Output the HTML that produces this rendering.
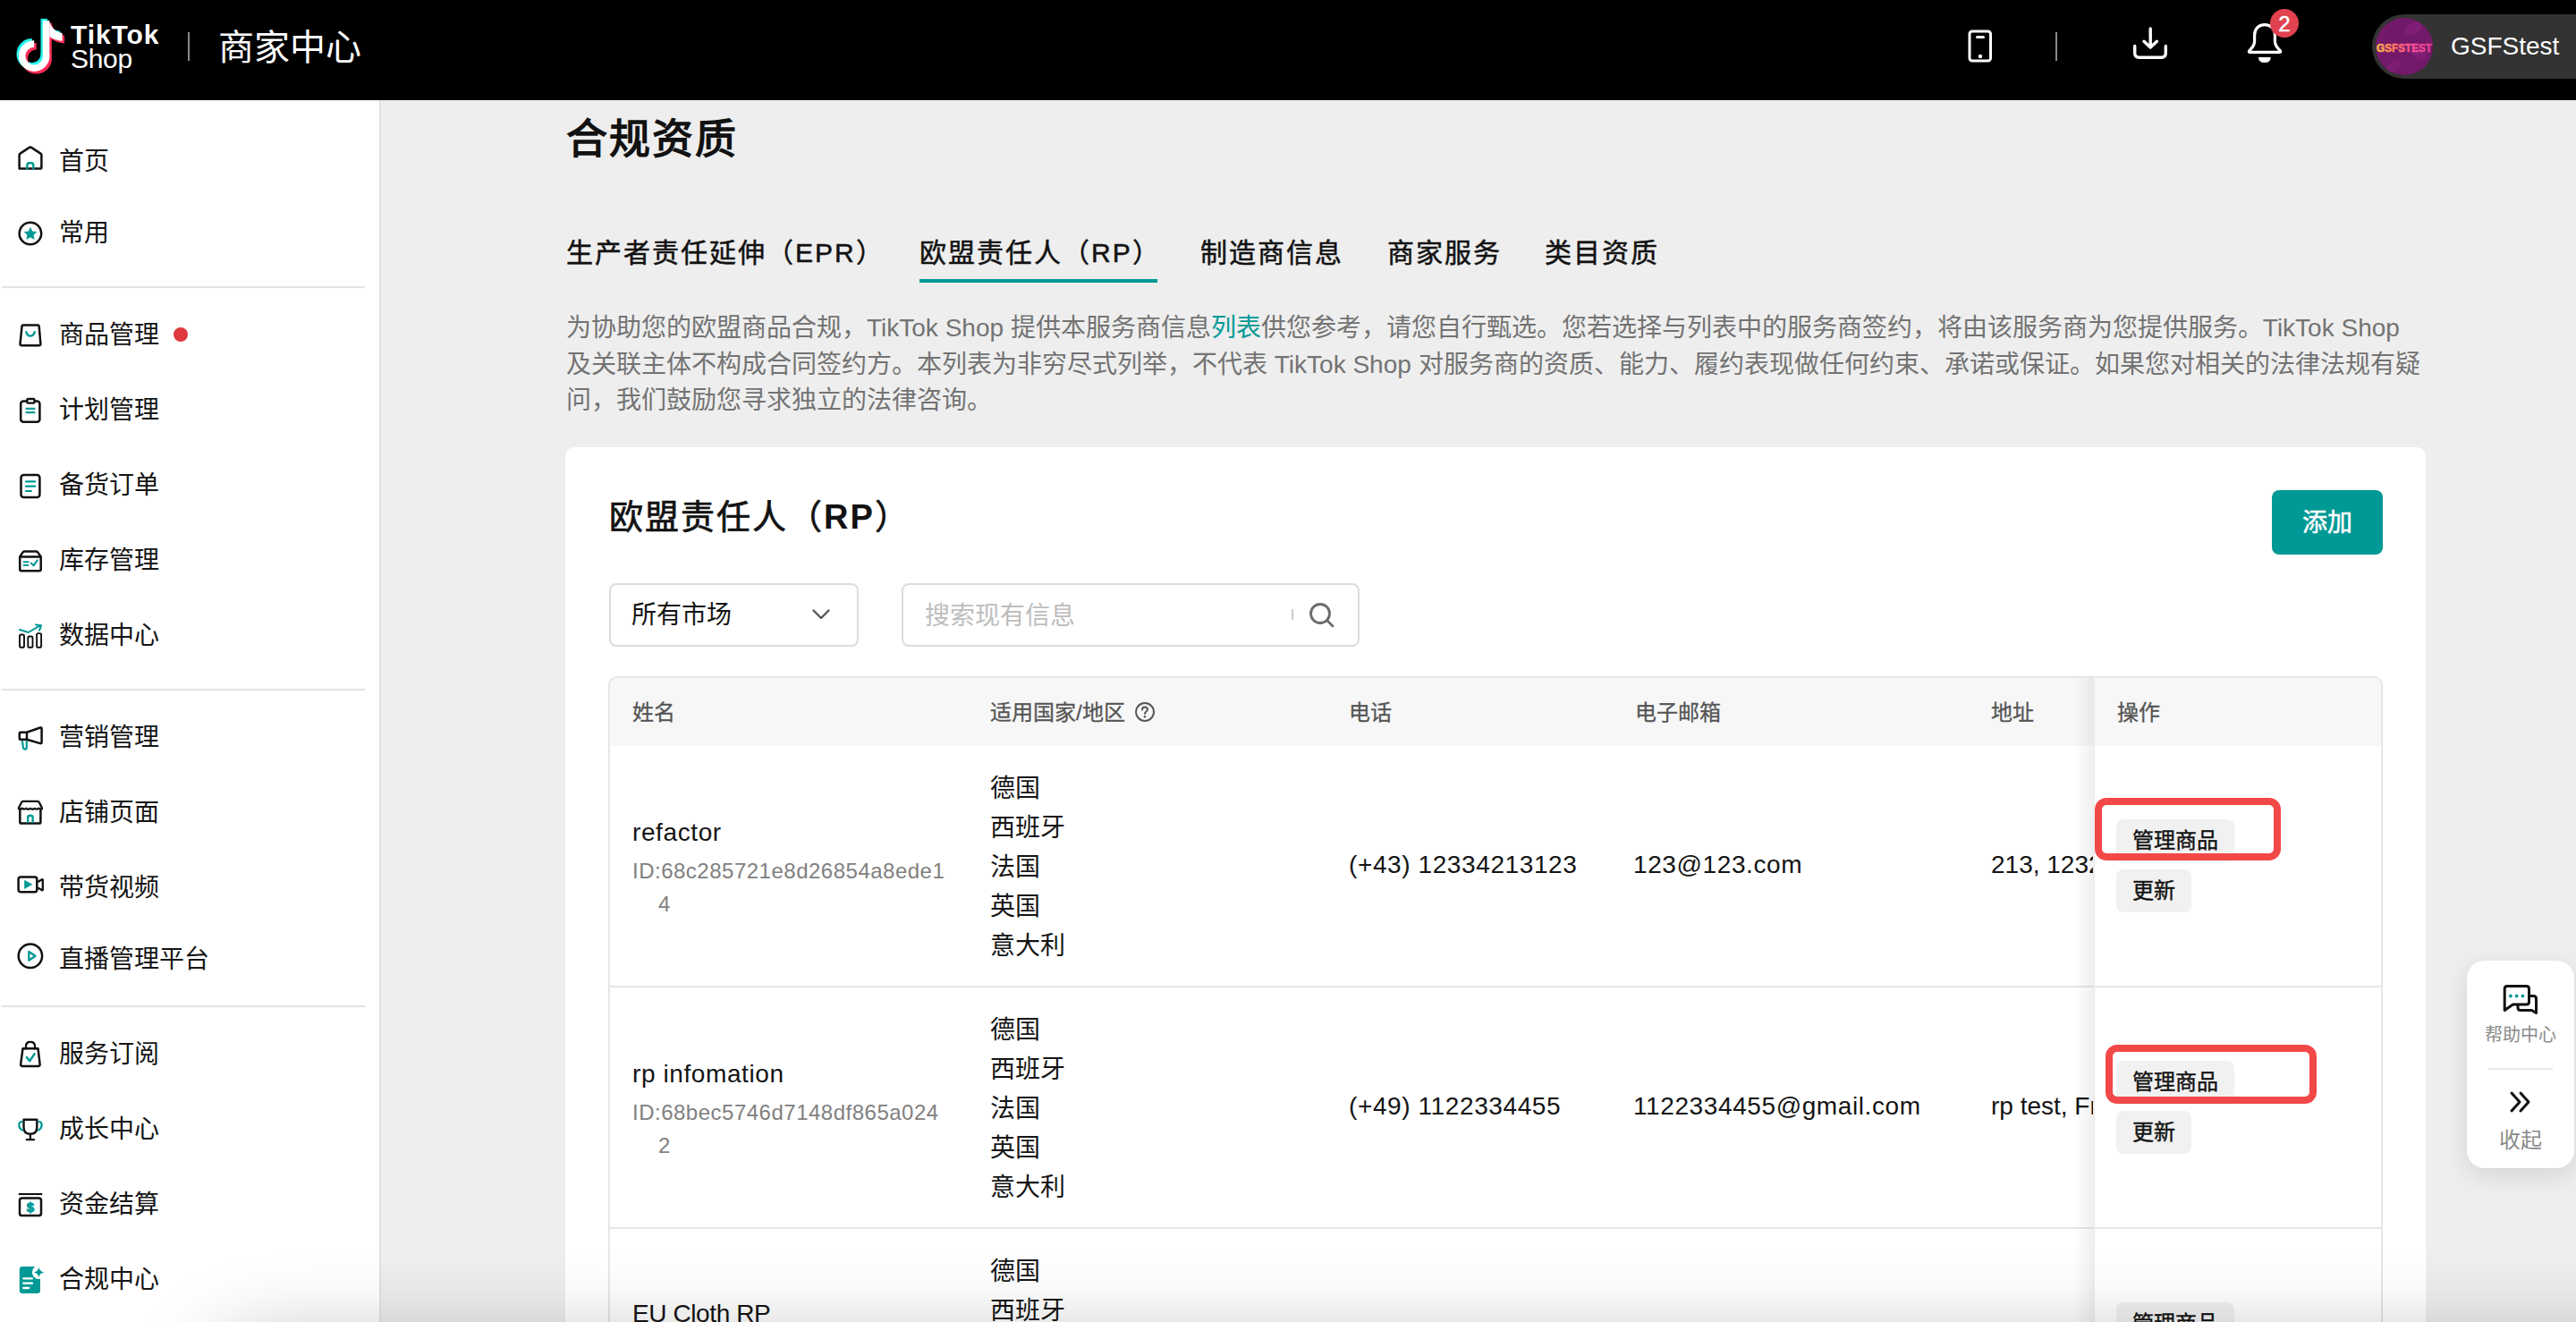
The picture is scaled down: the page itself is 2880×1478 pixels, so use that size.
<!DOCTYPE html>
<html lang="zh-CN"><head><meta charset="utf-8">
<style>
*{box-sizing:border-box;margin:0;padding:0}
html,body{width:2880px;height:1478px;overflow:hidden;background:#eeeeee;font-family:"Liberation Sans",sans-serif;color:#121212}
.abs{position:absolute}
.nw{white-space:nowrap}
#hdr{position:absolute;left:0;top:0;width:2880px;height:112px;background:#000}
#side{position:absolute;left:0;top:112px;width:424px;height:1366px;background:#fff}
.si{position:absolute;left:0;height:40px;width:420px}
.si svg{position:absolute;left:19px;top:0;width:30px;height:40px;overflow:visible}
.si span{position:absolute;left:66px;top:0;font-size:28px;line-height:40px;color:#141414;white-space:nowrap}
.sdiv{position:absolute;left:2px;width:406px;height:2px;background:#e3e3e3}
.tab{position:absolute;top:259px;font-size:30px;line-height:48px;font-weight:400;letter-spacing:2px;-webkit-text-stroke:0.5px #121212;color:#121212;white-space:nowrap}
.para{position:absolute;left:633px;font-size:28px;line-height:40px;color:#737373;white-space:nowrap}
#card{position:absolute;left:632px;top:500px;width:2080px;height:1100px;background:#fff;border-radius:10px}
.th{position:absolute;top:777px;font-size:24px;line-height:40px;color:#555;font-weight:400;-webkit-text-stroke:0.3px #555;white-space:nowrap}
.td{position:absolute;font-size:28px;line-height:40px;color:#141414;white-space:nowrap;letter-spacing:0.6px}
.cty{position:absolute;left:1107px;font-size:28px;line-height:44px;color:#141414;white-space:nowrap}
.idl{position:absolute;left:707px;font-size:24px;line-height:36px;color:#808080;white-space:nowrap;letter-spacing:0.5px}
.btn{position:absolute;height:48px;background:#f1f1f1;border-radius:8px;font-size:24px;line-height:48px;color:#141414;font-weight:400;-webkit-text-stroke:0.45px #141414;padding:0 18px;white-space:nowrap}
.rbox{position:absolute;border:8px solid #f34848;border-radius:13px}
.hline{position:absolute;left:680px;width:1984px;height:2px;background:#e6e6e6}
</style></head><body>

<!-- HEADER -->
<div id="hdr">
  <svg class="abs" style="left:14px;top:17px" width="64" height="70" viewBox="0 0 64 70"><g transform="translate(-2.4,-2.2)" fill="#25F4EE"><path d="M24.2 32.05 A13.55 13.55 0 1 0 37.75 45.6 V44.6" fill="none" stroke="#25F4EE" stroke-width="7.5"/><rect x="33.9" y="6.1" width="7.4" height="40.6"/><path d="M41.3 6.1 C42 12 47 19 55.6 20.1 V28.9 C50 28.5 45 26.5 41.3 24.1 Z"/></g><g transform="translate(2.5,2.6)" fill="#FE2C55"><path d="M24.2 32.05 A13.55 13.55 0 1 0 37.75 45.6 V44.6" fill="none" stroke="#FE2C55" stroke-width="7.5"/><rect x="33.9" y="6.1" width="7.4" height="40.6"/><path d="M41.3 6.1 C42 12 47 19 55.6 20.1 V28.9 C50 28.5 45 26.5 41.3 24.1 Z"/></g><g transform="translate(0,0)" fill="#fff"><path d="M24.2 32.05 A13.55 13.55 0 1 0 37.75 45.6 V44.6" fill="none" stroke="#fff" stroke-width="7.5"/><rect x="33.9" y="6.1" width="7.4" height="40.6"/><path d="M41.3 6.1 C42 12 47 19 55.6 20.1 V28.9 C50 28.5 45 26.5 41.3 24.1 Z"/></g></svg>
  <div class="abs nw" style="left:79px;top:24px;font-size:30px;line-height:30px;font-weight:bold;color:#fff;letter-spacing:0.9px">TikTok</div>
  <div class="abs nw" style="left:79px;top:51px;font-size:30px;line-height:30px;color:#fff;letter-spacing:-0.3px">Shop</div>
  <div class="abs" style="left:210px;top:36px;width:2px;height:32px;background:#8a8a8a"></div>
  <div class="abs nw" style="left:244px;top:28px;font-size:40px;line-height:50px;color:#fff">商家中心</div>

  <!-- phone -->
  <svg class="abs" style="left:2198px;top:32px" width="32" height="40" viewBox="0 0 32 40">
    <rect x="4" y="3" width="23.5" height="33" rx="3" fill="none" stroke="#fff" stroke-width="3"/>
    <rect x="11" y="8" width="10" height="3" rx="1.5" fill="#fff"/>
    <circle cx="16" cy="31" r="2.2" fill="#fff"/>
  </svg>
  <div class="abs" style="left:2298px;top:36px;width:2px;height:32px;background:#8a8a8a"></div>
  <!-- download -->
  <svg class="abs" style="left:2383px;top:28px" width="42" height="40" viewBox="0 0 42 40">
    <path d="M21.2 3.9 V24 M14 18.2 L21.2 25 L28.4 18.2" fill="none" stroke="#fff" stroke-width="3.4" stroke-linecap="round" stroke-linejoin="round"/>
    <path d="M3.7 23.5 V31.3 Q3.7 36.3 8.7 36.3 H33.3 Q38.3 36.3 38.3 31.3 V23.5" fill="none" stroke="#fff" stroke-width="3.4" stroke-linecap="round"/>
  </svg>
  <!-- bell -->
  <svg class="abs" style="left:2509px;top:26px" width="46" height="46" viewBox="0 0 46 46">
    <path d="M23 1.7 C16 1.7 11.6 6.5 11.6 13.5 V20 C11.6 24.5 9.5 27 6.5 29.8 Q4.2 32.2 6.5 32.3 H39.5 Q41.8 32.2 39.5 29.8 C36.5 27 34.4 24.5 34.4 20 V13.5 C34.4 6.5 30 1.7 23 1.7 Z" fill="none" stroke="#fff" stroke-width="3.2" stroke-linejoin="round"/>
    <path d="M16 37.9 H29.7 Q29.7 43.9 22.9 43.9 Q16 43.9 16 37.9 Z" fill="#fff"/>
  </svg>
  <div class="abs" style="left:2538px;top:10px;width:32px;height:32px;border-radius:50%;background:#e1424f;color:#fff;font-size:24px;line-height:33px;text-align:center;-webkit-text-stroke:0.5px #fff">2</div>
  <!-- user pill -->
  <div class="abs" style="left:2652px;top:16px;width:300px;height:72px;border-radius:36px;background:#333333"></div>
  <svg class="abs" style="left:2656px;top:20px" width="64" height="64" viewBox="0 0 64 64">
    <defs><linearGradient id="ag" x1="0" x2="1" y1="0" y2="0"><stop offset="0" stop-color="#f9c14a"/><stop offset="0.3" stop-color="#ff7a5e"/><stop offset="0.65" stop-color="#ff4f9a"/><stop offset="1" stop-color="#d8408a"/></linearGradient>
    <clipPath id="ac"><circle cx="32" cy="32" r="32"/></clipPath></defs>
    <circle cx="32" cy="32" r="32" fill="#741a6a"/>
    <g clip-path="url(#ac)" fill="#84207a" opacity="0.8">
      <ellipse cx="42" cy="12" rx="10" ry="6" transform="rotate(-25 42 12)"/>
      <ellipse cx="48" cy="40" rx="9" ry="6" transform="rotate(30 48 40)"/>
      <ellipse cx="20" cy="54" rx="10" ry="5" transform="rotate(-40 20 54)"/>
    </g>
    <text x="32" y="37.5" text-anchor="middle" font-family="Liberation Sans" font-weight="bold" font-size="13" textLength="62" lengthAdjust="spacingAndGlyphs" fill="url(#ag)" stroke="url(#ag)" stroke-width="0.6">GSFSTEST</text>
  </svg>
  <div class="abs nw" style="left:2740px;top:30px;font-size:28px;line-height:44px;color:#fff">GSFStest</div>
</div>

<!-- SIDEBAR -->
<div id="side"></div>
<div class="abs" style="left:424px;top:112px;width:2px;height:1366px;background:#e2e2e2"></div>
<div class="si" style="top:161px"><svg viewBox="0 0 30 40"><path d="M2.6 27.5 V12.3 Q2.6 11.2 3.6 10.6 L13.8 3.9 Q14.9 3.2 16 3.9 L26.4 10.6 Q27.4 11.2 27.4 12.3 V26.2 Q27.4 27.5 26 27.5 H4 Q2.6 27.5 2.6 26.2 Z" fill="none" stroke="#111" stroke-width="2.5" stroke-linejoin="round"/><path d="M11.4 28.5 V23.5 Q11.4 21.2 13.6 21.2 H16.1 Q18.3 21.2 18.3 23.5 V28.5" fill="none" stroke="#009995" stroke-width="2.4"/></svg><span>首页</span></div>
<div class="si" style="top:241px"><svg viewBox="0 0 30 40"><circle cx="14.9" cy="20" r="12.3" fill="none" stroke="#111" stroke-width="2.5"/><path d="M15.00 13.60 L16.94 17.93 L21.66 18.44 L18.14 21.62 L19.11 26.26 L15.00 23.90 L10.89 26.26 L11.86 21.62 L8.34 18.44 L13.06 17.93 Z" fill="#009995" stroke="#009995" stroke-width="0.8" stroke-linejoin="round"/></svg><span>常用</span></div>
<div class="sdiv" style="top:320px"></div>
<div class="si" style="top:355px"><svg viewBox="0 0 30 40"><path d="M7 8.5 H23.2 Q24.6 8.5 24.7 9.8 L26.4 29.6 Q26.5 31.2 25 31.2 H4.9 Q3.4 31.2 3.5 29.6 L5.5 9.8 Q5.6 8.5 7 8.5 Z" fill="none" stroke="#111" stroke-width="2.5" stroke-linejoin="round"/><path d="M10.4 16.2 Q11.5 20.6 15 20.6 Q18.5 20.6 19.8 16.2" fill="none" stroke="#009995" stroke-width="2.4" stroke-linecap="round"/></svg><span>商品管理</span></div>
<div class="abs" style="left:194px;top:366px;width:16px;height:16px;border-radius:50%;background:#e0393e"></div>
<div class="si" style="top:439px"><svg viewBox="0 0 30 40"><rect x="4.2" y="9.6" width="21.2" height="23.2" rx="3" fill="none" stroke="#111" stroke-width="2.5"/><rect x="11.3" y="7" width="8.2" height="4.6" rx="1.2" fill="#fff" stroke="#111" stroke-width="2.4"/><path d="M10.5 17.8 H19.5 M10.5 22.2 H19.5" stroke="#009995" stroke-width="2.2" stroke-linecap="round"/></svg><span>计划管理</span></div>
<div class="si" style="top:523px"><svg viewBox="0 0 30 40"><rect x="4.5" y="8" width="20.9" height="25.1" rx="3" fill="none" stroke="#111" stroke-width="2.5"/><path d="M10 15.3 H20.2 M10 20.7 H20.2 M10 26 H16" stroke="#009995" stroke-width="2.2" stroke-linecap="round"/></svg><span>备货订单</span></div>
<div class="si" style="top:607px"><svg viewBox="0 0 30 40"><path d="M3.2 15.4 L6.4 10.6 Q7 9.6 8.2 9.6 H21.6 Q22.8 9.6 23.4 10.6 L26.7 15.4 V29.6 Q26.7 31.3 25 31.3 H4.9 Q3.2 31.3 3.2 29.6 Z M3.2 15.4 H26.7" fill="none" stroke="#111" stroke-width="2.5" stroke-linejoin="round"/><path d="M7.5 21.2 H12.5 M7.5 25.1 H12.5" stroke="#009995" stroke-width="2" stroke-linecap="round"/><path d="M15.8 22.5 L18.5 25.4 L22.8 19.4" fill="none" stroke="#009995" stroke-width="2" stroke-linecap="round" stroke-linejoin="round"/></svg><span>库存管理</span></div>
<div class="si" style="top:691px"><svg viewBox="0 0 30 40"><rect x="3" y="18.5" width="5" height="14.3" rx="1.6" fill="none" stroke="#111" stroke-width="1.9"/><rect x="12.3" y="20.5" width="5.2" height="12.3" rx="1.6" fill="none" stroke="#111" stroke-width="1.9"/><rect x="22.1" y="17.1" width="5" height="15.7" rx="1.6" fill="none" stroke="#111" stroke-width="1.9"/><path d="M3 13 L12.8 16 L25.3 8.6" fill="none" stroke="#009995" stroke-width="2" stroke-linecap="round" stroke-linejoin="round"/><path d="M21 7.5 L27 8.3 L25 13.8" fill="none" stroke="#009995" stroke-width="2" stroke-linecap="round" stroke-linejoin="round"/></svg><span>数据中心</span></div>
<div class="sdiv" style="top:770px"></div>
<div class="si" style="top:805px"><svg viewBox="0 0 30 40"><path d="M3.8 13.7 H11 V21.8 H3.8 Q2.8 21.8 2.8 20.8 V14.7 Q2.8 13.7 3.8 13.7 Z M11 13.7 L26 8.5 Q27.6 8.2 27.6 9.6 V25 Q27.6 26.5 26 26.1 L11 21.8" fill="none" stroke="#111" stroke-width="2.5" stroke-linejoin="round"/><path d="M5.9 23 L6.9 30.5 Q7.3 32.6 9 32.6 Q10.8 32.6 10.8 30.5 V23" fill="none" stroke="#009995" stroke-width="2.2"/></svg><span>营销管理</span></div>
<div class="si" style="top:889px"><svg viewBox="0 0 30 40"><path d="M3.3 15 V30 Q3.3 31.6 4.9 31.6 H24.8 Q26.4 31.6 26.4 30 V15" fill="none" stroke="#111" stroke-width="2.5"/><path d="M5 8.2 Q5.5 6.9 6.9 6.9 H23 Q24.4 6.9 24.9 8.2 L27.9 14.3 Q28.2 15.3 27.2 15.6 Q25.5 16 24.3 14.6 Q22.2 16.6 19.8 14.8 Q17.4 16.6 15 14.8 Q12.6 16.6 10.2 14.8 Q7.8 16.6 5.6 14.6 Q4.3 16 2.6 15.6 Q1.6 15.3 1.9 14.3 Z" fill="none" stroke="#111" stroke-width="2.3" stroke-linejoin="round"/><path d="M12.2 31 V24.5 Q12.2 22.8 14.9 22.8 Q17.6 22.8 17.6 24.5 V31" fill="none" stroke="#009995" stroke-width="2.4"/></svg><span>店铺页面</span></div>
<div class="si" style="top:973px"><svg viewBox="0 0 30 40"><rect x="1.6" y="7.5" width="20.7" height="16.8" rx="2.5" fill="none" stroke="#111" stroke-width="2.5"/><path d="M23.2 13 L28 10.3 Q28.8 10 28.8 10.8 V21.7 Q28.8 22.5 28 22.2 L23.2 19.5" fill="none" stroke="#111" stroke-width="2.3" stroke-linejoin="round"/><path d="M8.5 11.2 V20.5 L16.8 15.8 Z" fill="#009995" stroke="#009995" stroke-width="0.6" stroke-linejoin="round"/></svg><span>带货视频</span></div>
<div class="si" style="top:1053px"><svg viewBox="0 0 30 40"><circle cx="14.9" cy="15.8" r="13.2" fill="none" stroke="#111" stroke-width="2.5"/><path d="M13.3 11 V20.8 L20.5 15.8 Z" fill="none" stroke="#009995" stroke-width="2.3" stroke-linejoin="round"/></svg><span>直播管理平台</span></div>
<div class="sdiv" style="top:1124px"></div>
<div class="si" style="top:1159px"><svg viewBox="0 0 30 40"><path d="M10 14.5 V10.5 Q10 5.8 15 5.8 Q20 5.8 20 10.5 V14.5" fill="none" stroke="#111" stroke-width="2.3"/><path d="M6.5 13.2 H23.5 L25.6 30.6 Q25.9 33 23.6 33 H6.2 Q3.9 33 4.2 30.6 Z" fill="none" stroke="#111" stroke-width="2.5" stroke-linejoin="round"/><path d="M10.8 23 L14.2 27.2 L19.6 19.3" fill="none" stroke="#009995" stroke-width="2.4" stroke-linecap="round" stroke-linejoin="round"/></svg><span>服务订阅</span></div>
<div class="si" style="top:1243px"><svg viewBox="0 0 30 40"><path d="M7.5 8.8 H22.3 V17.2 Q22.3 24.8 14.9 24.8 Q7.5 24.8 7.5 17.2 Z" fill="none" stroke="#111" stroke-width="2.4" stroke-linejoin="round"/><path d="M14.9 24.8 V30.8 M10.8 31.2 H19" stroke="#111" stroke-width="2.3" stroke-linecap="round"/><path d="M6.4 11.2 Q2.3 10.6 2.3 14.3 Q2.3 19.6 6.8 20.8 M23.4 11.2 Q27.6 10.6 27.6 14.3 Q27.6 19.6 23.1 20.8" fill="none" stroke="#009995" stroke-width="2.3"/></svg><span>成长中心</span></div>
<div class="si" style="top:1327px"><svg viewBox="0 0 30 40"><path d="M1.8 8 H28.2" stroke="#111" stroke-width="2.1"/><rect x="3" y="12.4" width="24" height="19.6" rx="2.6" fill="none" stroke="#111" stroke-width="2.5"/><text x="15" y="28.2" font-size="15" font-weight="bold" text-anchor="middle" fill="#009995" stroke="#009995" stroke-width="0.9" font-family="Liberation Sans">$</text></svg><span>资金结算</span></div>
<div class="si" style="top:1411px"><svg viewBox="0 0 30 40"><rect x="2.8" y="5" width="23.2" height="30" rx="3.2" fill="#009995"/><circle cx="24.5" cy="11.4" r="7.6" fill="#fff"/><path d="M24.5 5.6 Q25.2 10.6 30.3 11.4 Q25.2 12.2 24.5 17.2 Q23.8 12.2 18.7 11.4 Q23.8 10.6 24.5 5.6 Z" fill="#009995"/><path d="M7.2 18.3 H17 M7.2 23.7 H17 M7.2 29 H13.2" stroke="#fff" stroke-width="2.3" stroke-linecap="round"/></svg><span>合规中心</span></div>

<!-- MAIN -->
<div class="abs nw" style="left:633px;top:125px;font-size:46px;line-height:60px;font-weight:bold;letter-spacing:2px;color:#121212">合规资质</div>

<div class="tab" style="left:633px">生产者责任延伸（EPR）</div>
<div class="tab" style="left:1028px">欧盟责任人（RP）</div>
<div class="tab" style="left:1342px">制造商信息</div>
<div class="tab" style="left:1551px">商家服务</div>
<div class="tab" style="left:1727px">类目资质</div>
<div class="abs" style="left:1028px;top:312px;width:266px;height:4px;background:#009995"></div>

<div class="para" style="top:347px">为协助您的欧盟商品合规，TikTok Shop 提供本服务商信息<span style="color:#009995">列表</span>供您参考，请您自行甄选。您若选择与列表中的服务商签约，将由该服务商为您提供服务。TikTok Shop</div>
<div class="para" style="top:388px">及关联主体不构成合同签约方。本列表为非穷尽式列举，不代表 TikTok Shop 对服务商的资质、能力、履约表现做任何约束、承诺或保证。如果您对相关的法律法规有疑</div>
<div class="para" style="top:428px">问，我们鼓励您寻求独立的法律咨询。</div>

<div id="card"></div>
<div class="abs nw" style="left:681px;top:553px;font-size:38px;line-height:50px;font-weight:400;-webkit-text-stroke:0.7px #121212;letter-spacing:2px;color:#121212">欧盟责任人（<b style="-webkit-text-stroke:0">RP</b>）</div>
<div class="abs nw" style="left:2540px;top:548px;width:124px;height:72px;border-radius:8px;background:#009995;color:#fff;font-size:28px;line-height:74px;text-align:center;-webkit-text-stroke:0.5px #fff">添加</div>

<div class="abs" style="left:681px;top:652px;width:279px;height:71px;border:2px solid #dcdcdc;border-radius:8px"></div>
<div class="abs nw" style="left:706px;top:668px;font-size:28px;line-height:40px;color:#141414">所有市场</div>
<svg class="abs" style="left:906px;top:678px" width="24" height="18" viewBox="0 0 24 18"><path d="M3.5 4.5 L12 13 L20.5 4.5" fill="none" stroke="#555" stroke-width="2.4" stroke-linecap="round" stroke-linejoin="round"/></svg>

<div class="abs" style="left:1008px;top:652px;width:512px;height:71px;border:2px solid #dcdcdc;border-radius:8px"></div>
<div class="abs nw" style="left:1034px;top:669px;font-size:28px;line-height:40px;color:#bdbdbd">搜索现有信息</div>
<div class="abs" style="left:1444px;top:681px;width:2px;height:12px;background:#ccc"></div>
<svg class="abs" style="left:1462px;top:672px" width="32" height="32" viewBox="0 0 32 32"><circle cx="14" cy="14" r="10.5" fill="none" stroke="#6b6b6b" stroke-width="2.8"/><path d="M21.5 21.5 L28 28" stroke="#6b6b6b" stroke-width="2.8" stroke-linecap="round"/></svg>

<!-- TABLE -->
<div class="abs" style="left:680px;top:756px;width:1984px;height:800px;border:2px solid #e6e6e6;border-radius:10px 10px 0 0;background:#fff"></div>
<div class="abs" style="left:682px;top:758px;width:1980px;height:76px;background:#f7f7f7;border-radius:8px 8px 0 0"></div>
<div class="th" style="left:707px">姓名</div>
<div class="th" style="left:1107px">适用国家/地区</div>
<svg class="abs" style="left:1268px;top:784px" width="24" height="24" viewBox="0 0 24 24"><circle cx="12" cy="12" r="10" fill="none" stroke="#555" stroke-width="2"/><path d="M9 9.5 Q9 6.5 12 6.5 Q15 6.5 15 9.3 Q15 11 13 12 Q12 12.6 12 14" fill="none" stroke="#555" stroke-width="2" stroke-linecap="round"/><circle cx="12" cy="17.2" r="1.3" fill="#555"/></svg>
<div class="th" style="left:1508px">电话</div>
<div class="th" style="left:1828px">电子邮箱</div>
<div class="th" style="left:2226px">地址</div>
<div class="th" style="left:2367px">操作</div>

<!-- row 1 -->
<div class="td" style="left:707px;top:911px">refactor</div>
<div class="idl" style="top:956px">ID:68c285721e8d26854a8ede1</div>
<div class="idl" style="top:993px;left:736px">4</div>
<div class="cty" style="top:860px">德国</div>
<div class="cty" style="top:904px">西班牙</div>
<div class="cty" style="top:948px">法国</div>
<div class="cty" style="top:992px">英国</div>
<div class="cty" style="top:1036px">意大利</div>
<div class="td" style="left:1508px;top:947px">(+43) 12334213123</div>
<div class="td" style="left:1826px;top:947px">123@123.com</div>
<div class="td" style="left:2226px;top:947px;width:116px;overflow:hidden;letter-spacing:0">213, 1232, Vienna</div>
<div class="hline" style="top:1102px"></div>

<!-- row 2 -->
<div class="td" style="left:707px;top:1181px">rp infomation</div>
<div class="idl" style="top:1226px">ID:68bec5746d7148df865a024</div>
<div class="idl" style="top:1263px;left:736px">2</div>
<div class="cty" style="top:1130px">德国</div>
<div class="cty" style="top:1174px">西班牙</div>
<div class="cty" style="top:1218px">法国</div>
<div class="cty" style="top:1262px">英国</div>
<div class="cty" style="top:1306px">意大利</div>
<div class="td" style="left:1508px;top:1217px">(+49) 1122334455</div>
<div class="td" style="left:1826px;top:1217px">1122334455@gmail.com</div>
<div class="td" style="left:2226px;top:1217px;width:116px;overflow:hidden;letter-spacing:0">rp test, France</div>
<div class="hline" style="top:1372px"></div>

<!-- row 3 -->
<div class="td" style="left:707px;top:1449px;letter-spacing:-0.4px">EU Cloth RP</div>
<div class="cty" style="top:1400px">德国</div>
<div class="cty" style="top:1444px">西班牙</div>

<!-- fixed column -->
<div class="abs" style="left:2318px;top:758px;width:22px;height:720px;background:linear-gradient(to right,rgba(0,0,0,0),rgba(0,0,0,0.06))"></div>
<div class="abs" style="left:2340px;top:758px;width:2px;height:720px;background:#ececec"></div>

<div class="btn" style="left:2366px;top:916px">管理商品</div>
<div class="btn" style="left:2366px;top:972px">更新</div>
<div class="rbox" style="left:2342px;top:892px;width:208px;height:70px"></div>

<div class="btn" style="left:2366px;top:1186px">管理商品</div>
<div class="btn" style="left:2366px;top:1242px">更新</div>
<div class="rbox" style="left:2354px;top:1168px;width:236px;height:66px"></div>

<div class="btn" style="left:2366px;top:1456px">管理商品</div>

<!-- help widget -->
<div class="abs" style="left:2758px;top:1074px;width:120px;height:232px;background:#fff;border-radius:20px;box-shadow:0 8px 28px rgba(0,0,0,0.11)"></div>
<svg class="abs" style="left:2796px;top:1099px" width="42" height="38" viewBox="0 0 42 38">
  <path d="M4.2 30.5 V6.5 Q4.2 3.5 7.2 3.5 H28.5 Q31.5 3.5 31.5 6.5 V21 Q31.5 24 28.5 24 H13.5 Z" fill="none" stroke="#111" stroke-width="3" stroke-linejoin="round"/>
  <path d="M31.5 14.5 H36.5 Q39.5 14.5 39.5 17.5 V33.5 L34.5 30.5 H22 Q19 30.5 19 27.5 V25" fill="none" stroke="#111" stroke-width="3" stroke-linejoin="round"/>
  <circle cx="10.9" cy="14.5" r="1.9" fill="#009995"/><circle cx="17.6" cy="14.5" r="1.9" fill="#009995"/><circle cx="24.4" cy="14.5" r="1.9" fill="#009995"/>
</svg>
<div class="abs nw" style="left:2776px;top:1143px;width:84px;text-align:center;font-size:20px;line-height:28px;color:#8a8a8a">帮助中心</div>
<div class="abs" style="left:2782px;top:1194px;width:72px;height:2px;background:#e6e6e6"></div>
<svg class="abs" style="left:2804px;top:1218px" width="28" height="28" viewBox="0 0 28 28"><path d="M4 4 L13 14 L4 24 M14 4 L23 14 L14 24" fill="none" stroke="#111" stroke-width="3" stroke-linecap="round" stroke-linejoin="round"/></svg>
<div class="abs nw" style="left:2776px;top:1257px;width:84px;text-align:center;font-size:24px;line-height:36px;color:#8a8a8a">收起</div>

<!-- bottom shadow -->
<div class="abs" style="left:250px;top:1525px;width:3000px;height:120px;border-radius:60px;background:#000;box-shadow:0 0 90px 30px rgba(0,0,0,0.25)"></div>
</body></html>
